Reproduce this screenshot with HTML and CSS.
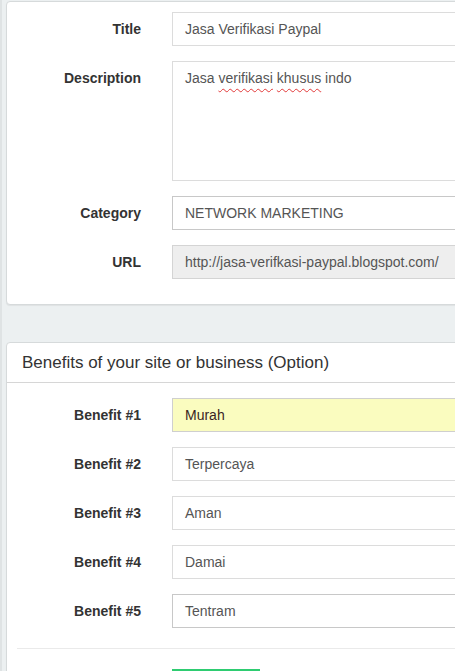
FILE: index.html
```html
<!DOCTYPE html>
<html>
<head>
<meta charset="utf-8">
<link rel="stylesheet" href="styles.css">
</head>
<body>
<div class="page">
  <div class="card card-top">
    <div class="card-body">
      <div class="row">
        <label class="lbl">Title</label>
        <div class="field field-light">Jasa Verifikasi Paypal</div>
      </div>
      <div class="row">
        <label class="lbl lbl-top">Description</label>
        <div class="field field-area"><span>Jasa </span><span class="typo">verifikasi</span><span> </span><span class="typo">khusus</span><span> indo</span></div>
      </div>
      <div class="row">
        <label class="lbl">Category</label>
        <div class="field field-dark">NETWORK MARKETING</div>
      </div>
      <div class="row">
        <label class="lbl">URL</label>
        <div class="field field-disabled">http://jasa-verifkasi-paypal.blogspot.com/</div>
      </div>
    </div>
  </div>

  <div class="card card-benefits">
    <div class="card-head">Benefits of your site or business (Option)</div>
    <div class="card-body card-body-b">
      <div class="row">
        <label class="lbl">Benefit #1</label>
        <div class="field field-autofill">Murah</div>
      </div>
      <div class="row">
        <label class="lbl">Benefit #2</label>
        <div class="field field-light">Terpercaya</div>
      </div>
      <div class="row">
        <label class="lbl">Benefit #3</label>
        <div class="field field-light">Aman</div>
      </div>
      <div class="row">
        <label class="lbl">Benefit #4</label>
        <div class="field field-light">Damai</div>
      </div>
      <div class="row">
        <label class="lbl">Benefit #5</label>
        <div class="field field-dark">Tentram</div>
      </div>
      <div class="divider"></div>
      <div class="actions">
        <div class="spacer"></div>
        <button class="btn-save" aria-label="Save"></button>
      </div>
    </div>
  </div>
</div>
</body>
</html>
```

FILE: styles.css
```css
html, body {
  margin: 0;
  padding: 0;
}
body {
  background: #ecf0f1;
  font-family: "Liberation Sans", Arial, sans-serif;
  overflow: hidden;
  width: 455px;
  height: 671px;
}
.page {
  border-left: 2px solid #dfe3e4;
  padding: 1px 0 0 4px;
  width: 700px;
}
.card {
  background: #fff;
  border: 1px solid #d6dadb;
  border-radius: 4px;
  box-shadow: 0 1px 1px rgba(0,0,0,0.06);
  width: 640px;
}
.card-body {
  padding: 10px 0 25px 0;
}
.card-top .row:last-child {
  margin-bottom: 0;
}
.card-benefits {
  margin-top: 37px;
}
.card-head {
  height: 40px;
  box-sizing: border-box;
  padding: 10px 15px 0 15px;
  font-size: 17px;
  line-height: 20px;
  color: #333;
  border-bottom: 1px solid #d6d6d6;
}
.card-body-b {
  padding-top: 15px;
}
.row {
  display: grid;
  grid-template-columns: 134px 1fr;
  column-gap: 31px;
  align-items: center;
  margin-bottom: 15px;
}
.lbl {
  text-align: right;
  font-weight: bold;
  font-size: 14px;
  color: #333;
  line-height: 20px;
}
.lbl-top {
  align-self: start;
  padding-top: 7px;
}
.field {
  height: 34px;
  box-sizing: border-box;
  border: 1px solid #d8d8d8;
  padding: 6px 12px;
  font-size: 14px;
  line-height: 20px;
  color: #555;
  width: 420px;
  white-space: nowrap;
}
.field-light { border-color: #dcdcdc; }
.field-dark { border-color: #c8c8c8; }
.field-area {
  height: 120px;
  padding-top: 6px;
  border-color: #dcdcdc;
}
.typo {
  text-decoration: underline wavy #e23a3a;
  text-decoration-thickness: 1px;
  text-underline-offset: 5px;
}
.field-disabled {
  background: #eeeeee;
  border-color: #d4d4d4;
}
.field-autofill {
  background: #fafcbf;
  border-color: #cfcfcf;
  color: #3a1f1f;
}
.divider {
  margin: 20px 0 0 10px;
  border-top: 1px solid #eaeaea;
}
.actions {
  display: grid;
  grid-template-columns: 134px 1fr;
  column-gap: 31px;
  padding-top: 20px;
}
.btn-save {
  width: 88px;
  height: 34px;
  border: 0;
  background: #2ecc71;
  color: #fff;
  font-family: "Liberation Sans", Arial, sans-serif;
  font-size: 14px;
}
```
